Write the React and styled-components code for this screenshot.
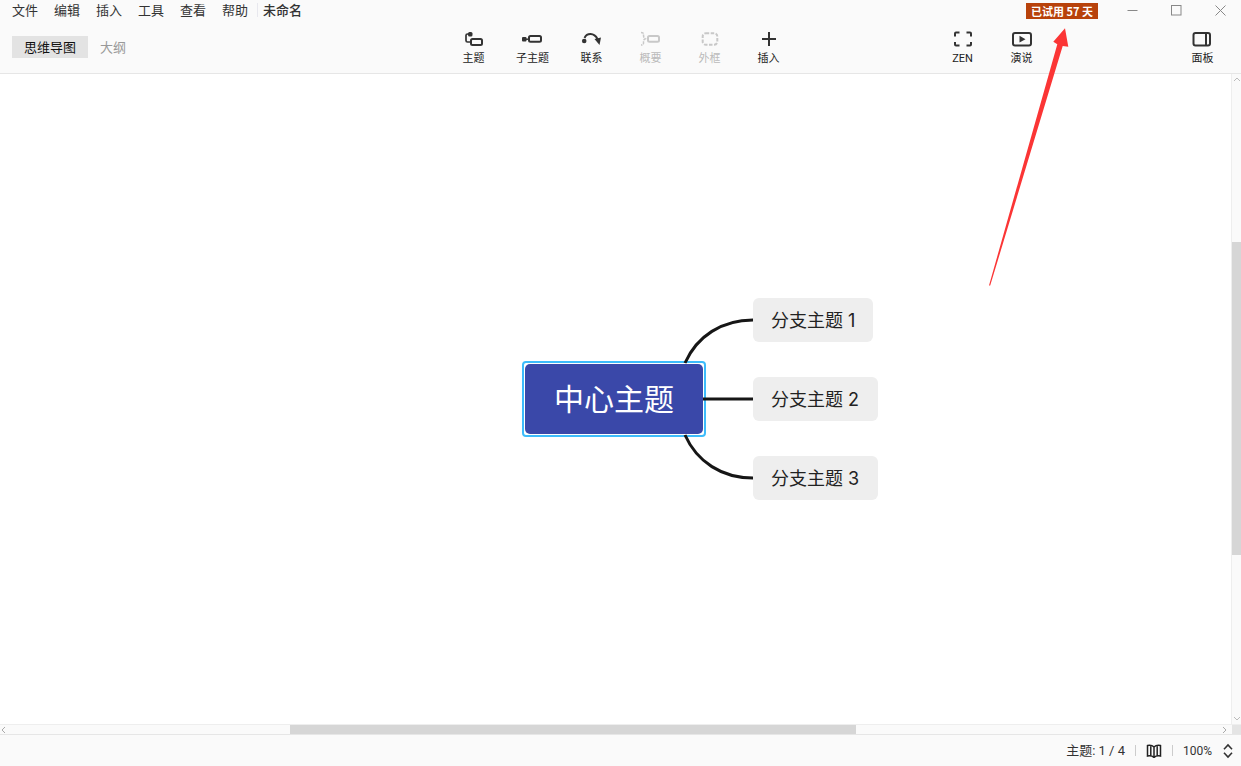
import React from "react";
import styled, { createGlobalStyle } from "styled-components";

const Global = createGlobalStyle`
  html, body { margin: 0; padding: 0; height: 100%; overflow: hidden; background: #fff; }
  #root { height: 100%; }
  * { box-sizing: border-box; }
`;
const FONT = `"Noto Sans CJK SC", "Noto Sans", sans-serif`;

const Page = styled.div`
  width: 1241px; height: 766px; display: flex; flex-direction: column; position: relative;
  font-family: ${FONT}; color: #222; overflow: hidden;
`;
const Header = styled.header`
  height: 74px; background: #fafafa; border-bottom: 1px solid #e6e6e6; flex: none; position: relative;
`;
const TitleBar = styled.div`
  height: 20px; display: flex; align-items: center; padding-left: 12px;
`;
const Menu = styled.span`
  font-size: 13px; line-height: 20px; width: 42px; flex: none; color: #333; padding-bottom: 1px;
  &:nth-child(6) { width: 35px; }
`;
const Title = styled.span`
  font-size: 13px; line-height: 20px; color: #333; padding-left: 5px; border-left: 1px solid #e8e8ee; height: 14px;
  display: flex; align-items: center; font-weight: 500;
`;
const Trial = styled.div`
  margin-left: auto; width: 72px; height: 16px; background: #b8420b; color: #fff; font-size: 11px;
  font-weight: 700; display: flex; align-items: center; justify-content: center; white-space: nowrap; margin-top: 1px;
`;
const WinButtons = styled.div`
  display: flex; margin-left: 29px; margin-right: 15px; gap: 33px; align-items: center;
`;
const ToolRow = styled.div`
  height: 53px; display: grid; grid-template-columns: 444px 1fr; position: relative;
`;
const Tabs = styled.div`
  display: flex; align-items: flex-start; padding: 16px 0 0 12px;
`;
const Tab = styled.div`
  height: 22px; font-size: 13px; display: flex; align-items: center; justify-content: center; padding-bottom: 1px;
  width: ${p => (p.$active ? "76px" : "50px")};
  background: ${p => (p.$active ? "#e3e3e3" : "transparent")};
  color: ${p => (p.$active ? "#111" : "#999")};
`;
const Tools = styled.div`
  display: flex; align-items: flex-start; padding-top: 8px;
`;
const Tool = styled.div`
  width: 59px; flex: none; display: flex; flex-direction: column; align-items: center;
  color: ${p => (p.$off ? "#c8c8c8" : "#333")};
  margin-left: ${p => p.$gap || 0}px;
`;
const ToolIcon = styled.div`
  height: 22px; display: flex; align-items: center; justify-content: center;
`;
const ToolLabel = styled.span`
  font-family: "Roboto", ${FONT};
  font-size: 11px; line-height: 14px; margin-top: 2px; color: ${p => (p.$off ? "#bbb" : "#222")};
`;
const Middle = styled.div`
  flex: 1; display: flex; min-height: 0;
`;
const Canvas = styled.main`
  flex: 1; position: relative; background: #fff;
`;
const VScroll = styled.div`
  width: 10px; flex: none; background: #fafafa; border-left: 1px solid #eee; position: relative;
`;
const VThumb = styled.div`
  position: absolute; left: 0; right: 0; top: 168px; height: 313px; background: #d6d6d6;
`;
const Chevron = styled.svg`
  position: absolute; width: 8px; height: 8px;
`;
const HScroll = styled.div`
  height: 11px; flex: none; background: #fafafa; border-top: 1px solid #eee; border-bottom: 1px solid #e6e6e6; position: relative;
`;
const HThumb = styled.div`
  position: absolute; left: 290px; width: 566px; top: 0; bottom: 0; background: #d6d6d6;
`;
const Corner = styled.div`
  position: absolute; right: 0; width: 9px; top: 0; bottom: 0; background: #e4e4e4;
`;
const Status = styled.footer`
  height: 31px; flex: none; background: #fafafa; display: flex; align-items: center; justify-content: flex-end;
  color: #333; padding-right: 8px;
`;
const StatusText = styled.span`
  font-family: "Roboto", ${FONT}; line-height: 16px; font-size: ${p => p.$size || 13}px; margin-right: ${p => p.$after || 0}px;
`;
const Sep = styled.i`
  display: block; width: 1px; height: 11px; background: #ccc; margin: 0 10px;
`;
const Central = styled.div`
  position: absolute; left: 522px; top: 287px; width: 184px; height: 76px;
  border: 2px solid #3dbcfb; border-radius: 4px; background: #fff; padding: 1px;
`;
const CentralInner = styled.div`
  width: 100%; height: 100%; background: #3a48a9; border-radius: 5px; color: #fff; font-size: 30px;
  display: flex; align-items: center; justify-content: center; line-height: 1; padding-bottom: 5px;
`;
const Branch = styled.div`
  position: absolute; left: 753px; top: ${p => p.$top}px; width: ${p => p.$w}px; height: 44px;
  background: #eeeeee; border-radius: 6px; font-size: 18px; color: #222; display: flex; align-items: center; padding: 0 0 2px 18px;
  font-family: "Inter", "Noto Sans CJK SC", sans-serif; white-space: pre;
`;
const Lines = styled.svg`
  position: absolute; left: 0; top: 0; width: 1231px; height: 650px; pointer-events: none;
`;
const ArrowSvg = styled.svg`
  position: absolute; left: 0; top: 0; width: 1241px; height: 766px; pointer-events: none;
`;

const S = { fill: "none", stroke: "currentColor", strokeWidth: 2 };
const I = ({ children, w = 22, h = 20 }) => <svg width={w} height={h} viewBox={`0 0 ${w} ${h}`}>{children}</svg>;

const IconTopic = () => <I><rect x="5" y="3" width="4.500" height="4.500" rx="1.500" fill="currentColor" /><path d="M6 5H4.500Q3 5 3 6.500V11.500Q3 13 4.500 13H8" {...S} strokeWidth="1.700" /><rect x="8" y="10" width="11" height="6" rx="1.500" {...S} /></I>;
const IconSub = () => <I><rect x="0" y="8" width="4.500" height="4.500" rx="1" fill="currentColor" /><path d="M4 10.200h3" {...S} strokeWidth="1.500" /><rect x="7" y="7" width="12" height="5.800" rx="1.500" {...S} /></I>;
const IconRel = () => <I><circle cx="3.200" cy="12" r="2.300" fill="currentColor" /><path d="M3.500 9C6 3.800 13 3.500 16.500 10" {...S} /><path d="M13.500 10l6.500-1.500-1.500 7.500z" fill="currentColor" /></I>;
const IconSummary = () => <I><path d="M1 3.500c3 0 2.500 1 2.500 2.500s.3 3 1.800 3.800c-1.500.7-1.800 1.700-1.800 3.200s.5 3-2.500 3" {...S} strokeWidth="1.500" strokeDasharray="3 1" /><rect x="8" y="7" width="11" height="5.800" rx="1.500" {...S} /></I>;
const IconBoundary = () => <I><rect x="3.700" y="4.300" width="14.600" height="11.400" rx="3" {...S} strokeDasharray="3.500 1.500" /></I>;
const IconPlus = () => <I><path d="M11 3v14M4 10h14" {...S} /></I>;
const IconZen = () => <I><path d="M3 7.500V4.500Q3 3.500 4 3.500H7.500M14.500 3.500H18Q19 3.500 19 4.500V7.500M19 13V15.500Q19 16.500 18 16.500H14.500M7.500 16.500H4Q3 16.500 3 15.500V13" {...S} /></I>;
const IconPlay = () => <I><rect x="2" y="4" width="18" height="12.500" rx="2" {...S} /><path d="M8.500 6.800l6 3.400-6 3.400z" fill="currentColor" /></I>;
const IconPanel = () => <I><rect x="1.500" y="4" width="16.500" height="12.500" rx="2" {...S} /><path d="M14 4v12.500" {...S} /></I>;
const IconMap = () => <svg width="16" height="14" viewBox="0 0 16 14" style={{ display: "block" }}><path d="M8 3C6.500 1.500 4 1 1.500 1.500v10.500c2.500-.5 5 0 6.500 1.500 1.500-1.500 4-2 6.500-1.500V1.500C12 1 9.500 1.500 8 3zM8 3v10.500M4.800 1.300v10.500M11.200 1.300v10.500" fill="none" stroke="#222" strokeWidth="1.500" /></svg>;
const IconUpDown = () => <svg width="10" height="16" viewBox="0 0 10 16" style={{ display: "block" }}><path d="M1 6.200L5 2l4 4.200M1 9.800L5 14l4-4.200" fill="none" stroke="#333" strokeWidth="1.600" /></svg>;

const menus = ["文件", "编辑", "插入", "工具", "查看", "帮助"];

export default function App() {
  return (
    <Page>
      <Global />
      <Header>
        <TitleBar>
          {menus.map(m => <Menu key={m}>{m}</Menu>)}
          <Title>未命名</Title>
          <Trial>已试用 57 天</Trial>
          <WinButtons>
            <svg width="11" height="11" viewBox="0 0 11 11"><path d="M0.500 5.500h10" stroke="#888" /></svg>
            <svg width="11" height="11" viewBox="0 0 11 11"><rect x=".5" y=".5" width="9.500" height="9.500" fill="none" stroke="#888" /></svg>
            <svg width="11" height="11" viewBox="0 0 11 11"><path d="M.5.5l10 10M10.500.5l-10 10" stroke="#888" /></svg>
          </WinButtons>
        </TitleBar>
        <ToolRow>
          <Tabs>
            <Tab $active>思维导图</Tab>
            <Tab>大纲</Tab>
          </Tabs>
          <Tools>
            <Tool><ToolIcon><IconTopic /></ToolIcon><ToolLabel>主题</ToolLabel></Tool>
            <Tool><ToolIcon><IconSub /></ToolIcon><ToolLabel>子主题</ToolLabel></Tool>
            <Tool><ToolIcon><IconRel /></ToolIcon><ToolLabel>联系</ToolLabel></Tool>
            <Tool $off><ToolIcon><IconSummary /></ToolIcon><ToolLabel $off>概要</ToolLabel></Tool>
            <Tool $off><ToolIcon><IconBoundary /></ToolIcon><ToolLabel $off>外框</ToolLabel></Tool>
            <Tool><ToolIcon><IconPlus /></ToolIcon><ToolLabel>插入</ToolLabel></Tool>
            <Tool $gap={135}><ToolIcon><IconZen /></ToolIcon><ToolLabel>ZEN</ToolLabel></Tool>
            <Tool><ToolIcon><IconPlay /></ToolIcon><ToolLabel>演说</ToolLabel></Tool>
            <Tool $gap={122}><ToolIcon><IconPanel /></ToolIcon><ToolLabel>面板</ToolLabel></Tool>
          </Tools>
        </ToolRow>
      </Header>
      <Middle>
        <Canvas>
          <Central><CentralInner>中心主题</CentralInner></Central>
          <Branch $top={224} $w={120}>分支主题 1</Branch>
          <Branch $top={303} $w={125}>分支主题 2</Branch>
          <Branch $top={382} $w={125}>分支主题 3</Branch>
          <Lines viewBox="0 0 1231 650">
            <g fill="none" stroke="#161616" strokeWidth="3">
              <path d="M685 289C697 262 722 246 753 246" />
              <path d="M703 325H753" />
              <path d="M685 361C697 388 722 404 753 404" />
            </g>
          </Lines>
        </Canvas>
        <VScroll>
          <Chevron style={{ top: 1, left: 1 }} viewBox="0 0 8 8"><path d="M1 6l3-3 3 3" fill="none" stroke="#bbb" /></Chevron>
          <VThumb />
          <Chevron style={{ bottom: 2, left: 1 }} viewBox="0 0 8 8"><path d="M1 3l3 3 3-3" fill="none" stroke="#bbb" /></Chevron>
        </VScroll>
      </Middle>
      <HScroll>
        <Chevron style={{ top: 1, left: 0 }} viewBox="0 0 8 8"><path d="M5 1L2 4l3 3" fill="none" stroke="#aaa" /></Chevron>
        <HThumb />
        <Chevron style={{ top: 1, left: 1220 }} viewBox="0 0 8 8"><path d="M3 1l3 3-3 3" fill="none" stroke="#aaa" /></Chevron>
        <Corner />
      </HScroll>
      <Status>
        <StatusText>主题: 1 / 4</StatusText>
        <Sep />
        <IconMap />
        <Sep />
        <StatusText $size={12} $after={11}>100%</StatusText>
        <IconUpDown />
      </Status>
      <ArrowSvg viewBox="0 0 1241 766">
        <path d="M989 285.500L1057.300 44.300L1053.300 41.700L1065 28.300L1068.300 46.700L1062.700 46L990.200 285.500Z" fill="#fb3535" />
      </ArrowSvg>
    </Page>
  );
}
